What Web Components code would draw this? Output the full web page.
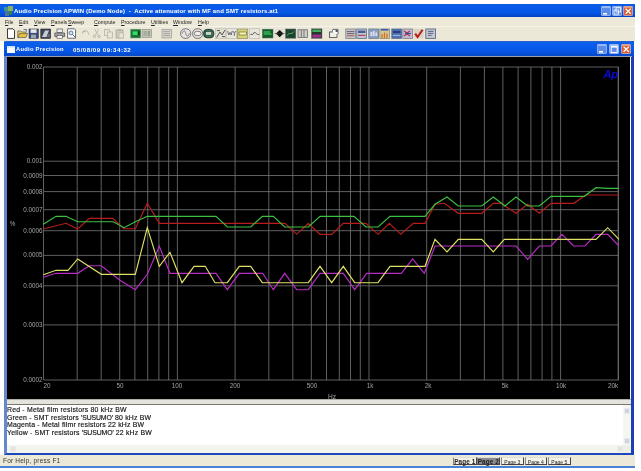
<!DOCTYPE html>
<html><head><meta charset="utf-8"><title>Audio Precision APWIN</title>
<style>
html,body{margin:0;padding:0;background:#fff;width:641px;height:471px;overflow:hidden}
body{font-family:"Liberation Sans",Arial,sans-serif}
</style></head><body>
<ap-app></ap-app>
<script>
function def(name, html, init){
  customElements.define(name, class extends HTMLElement{
    connectedCallback(){
      if(this.shadowRoot) return;
      const r=this.attachShadow({mode:'open'});
      r.innerHTML = typeof html==='function'? html(this): html;
      if(init) init(r,this);
    }
  });
}

/* caption button */
def('ap-win-btn', h=>{
  const k=h.getAttribute('kind');
  const fill = k==='close' ? '#d8603a' : '#5f8ce6';
  const hi = k==='close' ? '#eea68c' : '#a9c4f5';
  const glyph = {
    min:'<rect x="2" y="7" width="4" height="1.6" fill="#fff"/>',
    max:'<rect x="2.2" y="2.4" width="6" height="6" fill="none" stroke="#fff" stroke-width="1"/><rect x="2.2" y="2.2" width="6" height="1.4" fill="#fff"/>',
    restore:'<rect x="4" y="1.8" width="4.4" height="4.2" fill="none" stroke="#fff" stroke-width=".8"/><rect x="2" y="4" width="4.4" height="4.2" fill="none" stroke="#fff" stroke-width=".8"/>',
    close:'<path d="M2.6 2.6L7.8 7.8M7.8 2.6L2.6 7.8" stroke="#fff" stroke-width="1.3"/>'
  }[k];
  return `<style>:host{display:block;flex:none;width:10px;height:10px}
  svg{display:block;width:10px;height:10px}</style>
  <svg viewBox="0 0 10 10"><rect x=".3" y=".3" width="9.4" height="9.4" rx="1.4" fill="${fill}" stroke="#dfe8fb" stroke-width=".6"/><path d="M1 1.2h8" stroke="${hi}" stroke-width="1.2"/>${glyph}</svg>`;
});

/* top window title bar */
def('ap-titlebar', `<style>
:host{display:flex;align-items:center;height:13px;box-sizing:border-box;background:linear-gradient(#0c5ae0,#0a5cec 20%,#0656e4 70%,#0442c4);color:#fff;font:bold 6px "Liberation Sans",sans-serif;letter-spacing:.15px}
svg{width:9px;height:10px;margin-left:4px;flex:none}
span{margin-left:1px;flex:1 1 auto;white-space:pre}
.b{display:flex;flex:none;gap:1px;margin-right:2px}
</style>
<svg viewBox="0 0 9 10"><rect x="0" y="1" width="4" height="4" fill="#3a9a8a"/><rect x="4" y="0" width="5" height="5" fill="#88b060"/><rect x="1" y="5" width="4" height="5" fill="#5070a0"/><rect x="5" y="5" width="3" height="4" fill="#2f7f50"/></svg>
<span>Audio Precision APWIN (Demo Node)  -  Active attenuator with MF and SMT resistors.at1</span>
<div class="b"><ap-win-btn kind="min"></ap-win-btn><ap-win-btn kind="restore"></ap-win-btn><ap-win-btn kind="close"></ap-win-btn></div>`);

/* menu */
def('ap-menubar', h=>{
  const items=['File','Edit','View','Panels','Sweep','Compute','Procedure','Utilities','Window','Help'];
  const widths=[14,15,17,17,26,27,30,22,25,20];
  return `<style>:host{display:flex;height:10px;box-sizing:border-box;padding-left:5px;background:#ece9d8;color:#222;font:5.3px/10px "Liberation Sans",sans-serif;border-bottom:1px solid #f6f4ea}
  span{display:block;flex:none;white-space:nowrap} u{text-decoration-thickness:.5px;text-underline-offset:1px}</style>`+
  items.map((t,i)=>`<span style="width:${widths[i]}px"><u>${t[0]}</u>${t.slice(1)}</span>`).join('');
});

/* toolbar icon */
const ICONS={
 new:'<path d="M2.5 .8H8l1.5 1.5V10.4H2.5z" fill="#fff" stroke="#222" stroke-width=".9"/>',
 open:'<path d="M.8 9.6V3h3l1 1h4v1.4" fill="#f0d060" stroke="#555" stroke-width=".7"/><path d="M.8 9.6L2.6 5.4h8L9 9.6z" fill="#e8bc3c" stroke="#555" stroke-width=".7"/><path d="M6.5 1.6h3v2" fill="none" stroke="#246" stroke-width=".7"/>',
 save:'<rect x="1" y="1" width="9.4" height="9.4" fill="#3c4a7c" stroke="#223" stroke-width=".5"/><rect x="2.6" y="1.3" width="6" height="3.6" fill="#e8e8e8"/><rect x="3" y="6.6" width="5" height="3.6" fill="#9aa"/>',
 saveall:'<rect x=".8" y="1" width="9.8" height="9.4" fill="#3a4458" stroke="#111" stroke-width=".5"/><path d="M2 9L5 2.5h4L6.5 9z" fill="#c8ccd4"/><rect x="7" y="6" width="3" height="3" fill="#667"/>',
 print:'<rect x="3" y="1" width="5.4" height="3.4" fill="#eee" stroke="#444" stroke-width=".6"/><path d="M.8 5h9.8v3.6H.8z" fill="#a8a8a8" stroke="#444" stroke-width=".7"/><rect x="3" y="7.6" width="5.4" height="2.6" fill="#fff" stroke="#444" stroke-width=".6"/>',
 preview:'<path d="M1.6 .8H8.4L9.6 2V10.2H1.6z" fill="#fff" stroke="#445" stroke-width=".8"/><circle cx="5" cy="5" r="2" fill="#cfe0f0" stroke="#357" stroke-width=".7"/><path d="M6.4 6.4L9 9" stroke="#357" stroke-width=".9"/>',
 undo:'<path d="M3 3.4C6 1.8 8.6 3.4 8.6 6.6M3 3.4L2.6 6M3 3.4L5.6 3.8" fill="none" stroke="#b8b4a8" stroke-width="1"/>',
 cut:'<path d="M3.6 1L7 7.2M7.8 1L4.4 7.2" stroke="#b8b4a8" stroke-width=".8"/><circle cx="3.4" cy="8.4" r="1.2" fill="none" stroke="#b8b4a8"/><circle cx="8" cy="8.4" r="1.2" fill="none" stroke="#b8b4a8"/>',
 copy:'<rect x="1.5" y="1.5" width="5" height="6" fill="#e8e4d8" stroke="#b8b4a8" stroke-width=".8"/><rect x="4.5" y="4" width="5" height="6" fill="#e8e4d8" stroke="#b8b4a8" stroke-width=".8"/>',
 paste:'<rect x="2" y="2" width="7" height="8" fill="#cfcbbc" stroke="#aaa698" stroke-width=".8"/><rect x="4" y="1" width="3" height="2" fill="#b8b4a8"/><rect x="5" y="5" width="4.6" height="5" fill="#e8e4d8" stroke="#b0ac9e" stroke-width=".6"/>',
 gen:'<rect x=".6" y="1.2" width="10.2" height="8.8" fill="#1f6f3c" stroke="#6a7" stroke-width=".5"/><rect x="2.6" y="3.4" width="5" height="3.6" fill="#30e060"/><rect x="8" y="3.4" width="1.6" height="3.6" fill="#0a3018"/>',
 gen2:'<rect x="1" y="1.5" width="9.4" height="8" fill="#c4c4b8" stroke="#8a8a80" stroke-width=".6"/><rect x="2.4" y="3" width="4" height="5" fill="#a8b0a0"/><rect x="7" y="3" width="2" height="5" fill="#96a090"/>',
 panel:'<rect x="1" y="1.4" width="9.4" height="8.6" fill="#d8d4c8" stroke="#999" stroke-width=".7"/><path d="M2.4 3.6h6.6M2.4 5.6h6.6M2.4 7.6h6.6" stroke="#999" stroke-width=".8"/>',
 sine:'<rect x=".6" y=".8" width="10.2" height="9.6" rx="4.6" fill="#e8e6da" stroke="#557" stroke-width=".8"/><path d="M2.2 5.6C3.6 2 5 2 5.8 5.6S8 9 9.4 5.2" fill="none" stroke="#557" stroke-width=".7"/>',
 oval:'<rect x=".6" y=".8" width="10.2" height="9.6" rx="4.6" fill="#e8e6da" stroke="#556" stroke-width=".8"/><rect x="2.4" y="3.4" width="6.6" height="4.2" rx="2" fill="#f0f0e8" stroke="#556" stroke-width=".7"/>',
 scope:'<rect x=".6" y="1.4" width="10.2" height="8.4" rx="3.6" fill="#2e7a50" stroke="#223" stroke-width=".9"/><rect x="2.6" y="3.6" width="6" height="3.6" fill="#c8d8c0" stroke="#123" stroke-width=".5"/>',
 tk:'<rect x=".6" y=".8" width="10.2" height="9.6" fill="#e4e2d4" stroke="#aaa" stroke-width=".5"/><path d="M1.6 9.6L5 4l2 3 3-5M2 2.6h3M7 8.6h3" fill="none" stroke="#444" stroke-width=".9"/>',
 wy:'<rect x=".6" y=".8" width="10.2" height="9.6" fill="#e8e6da" stroke="#aaa" stroke-width=".5"/><path d="M1.6 3l1.2 4 1.2-2.6L5.2 7l1-4M7 3l1.4 2.4L10 3M8.4 5.4V8" fill="none" stroke="#445" stroke-width=".7"/>',
 ybar:'<rect x=".6" y="1" width="10.2" height="9.4" fill="#d8d470" stroke="#776" stroke-width=".6"/><rect x="2" y="4" width="7.4" height="3" fill="#f8f4a0" stroke="#555" stroke-width=".6"/>',
 wave:'<rect x=".6" y=".8" width="10.2" height="9.6" fill="#e8e6da" stroke="#aaa" stroke-width=".5"/><path d="M1.4 6.4h2.4L5.6 4l1.8 1.8 1.2 .6h1.6" fill="none" stroke="#444" stroke-width=".8"/>',
 gbar:'<rect x=".4" y="1.2" width="10.6" height="8.8" fill="#185c28" stroke="#466" stroke-width=".5"/><path d="M1.6 4h6.6M1.6 6h8" stroke="#40e070" stroke-width="1.2"/>',
 diamond:'<rect x=".6" y=".8" width="10.2" height="9.6" fill="#e4e2d4"/><path d="M5.7 2L9.4 5.6 5.7 9.2 2 5.6z" fill="#111"/><path d="M.8 5.6h9.8" stroke="#333" stroke-width=".7"/>',
 dbox:'<rect x=".6" y="1" width="10.2" height="9.2" fill="#18452c" stroke="#667" stroke-width=".6"/><path d="M2.4 7.6C4 3 6.4 8 9 3.4" fill="none" stroke="#8c8" stroke-width=".7"/>',
 gbox:'<rect x="1" y="1.8" width="9.4" height="7.6" fill="#d0cec0" stroke="#667" stroke-width=".8"/><path d="M4.4 2v7M7 2v7" stroke="#667" stroke-width=".8"/>',
 mbox:'<rect x=".4" y=".8" width="10.6" height="9.6" fill="#283828" stroke="#777" stroke-width=".5"/><rect x="1.4" y="1.6" width="8.6" height="2.4" fill="#40b060"/><rect x="1.4" y="6.6" width="8.6" height="3" fill="#a03090"/>',
 printsm:'<rect x="1.4" y="4" width="7.6" height="5.4" fill="#f0efe4" stroke="#444" stroke-width=".8"/><path d="M4 4l1-2.6h5V6.4" fill="#fff" stroke="#445" stroke-width=".8"/><rect x="7.6" y="2.2" width="2" height="1.6" fill="#223"/>',
 b1:'<rect x=".8" y="1" width="9.8" height="9.4" fill="#c8c6c0" stroke="#77808c" stroke-width=".8"/><path d="M2 3.6h7.4M2 5.6h7.4" stroke="#6a5a80" stroke-width="1"/><path d="M2 7.8h7.4" stroke="#a04a50" stroke-width=".9"/>',
 b2:'<rect x=".8" y="1" width="9.8" height="9.4" fill="#c0c4d0" stroke="#5a6a8c" stroke-width=".8"/><rect x="2" y="2.6" width="7.4" height="2.4" fill="#4a5a98"/><path d="M2 7.4h7.4" stroke="#b04a60" stroke-width="1.2"/>',
 b3:'<rect x=".8" y="1" width="9.8" height="9.4" fill="#8aa0c0" stroke="#6a7a90" stroke-width=".8"/><path d="M2.4 4h2v4h-2zM5 3h1.6v5H5zM7.4 4.6h1.8V8H7.4z" fill="#dde"/>',
 b4:'<rect x=".8" y="1" width="9.8" height="9.4" fill="#d4c890" stroke="#8a8a70" stroke-width=".8"/><path d="M2 1.8h7.4" stroke="#3050c0" stroke-width="1.5"/><path d="M3 10V6M5.5 10V4.4M8 10V5.6" stroke="#d07030" stroke-width="1.3"/>',
 b5:'<rect x=".8" y="1" width="9.8" height="9.4" fill="#4a70b0" stroke="#5a6a8c" stroke-width=".8"/><rect x="2" y="3" width="7.4" height="2" fill="#283c80"/><path d="M2 7.4h7.4" stroke="#a8c0e0" stroke-width="1"/>',
 b6:'<rect x=".8" y="1" width="9.8" height="9.4" fill="#c8bcc8" stroke="#7a7a90" stroke-width=".8"/><path d="M2 3l3 2 3-2M2 8l3-2 3 2" fill="none" stroke="#a03060" stroke-width="1.1"/><path d="M3 5.5h6" stroke="#4050a0" stroke-width="1.2"/>',
 check:'<rect x=".8" y="1" width="9.8" height="9.4" fill="#d8d4c8"/><path d="M2.2 5.6L4.6 9 9.6 1.8" fill="none" stroke="#c01818" stroke-width="2"/>',
 b8:'<rect x=".8" y="1" width="9.8" height="9.4" fill="#c8c8d0" stroke="#5a6a8c" stroke-width=".9"/><path d="M3 3.4h5.4M3 5.4h5.4M3 7.4h3.6" stroke="#5a6488" stroke-width="1"/>'
};
def('ap-tool', h=>`<style>:host{display:block;width:11.4px;height:11.4px;flex:none}svg{display:block;width:11.4px;height:11.4px}</style>
<svg viewBox="0 0 11.4 11.4">${ICONS[h.getAttribute('i')]||''}</svg>`);

def('ap-toolbar', h=>{
  const groups=[
   [5.4,['new','open','save','saveall']],
   [3.5,['print','preview']],
   [2.6,['undo','cut','copy','paste']],
   [4.6,['gen','gen2']],
   [8.6,['panel']],
   [7.6,['sine','oval','scope','tk','wy','ybar','wave']],
   [2.3,['gbar','diamond','dbox','gbox']],
   [3.4,['mbox']],
   [5.6,['printsm']],
   [5.3,['b1','b2','b3','b4','b5','b6','check','b8']]
  ];
  return `<style>:host{display:flex;align-items:center;height:14px;box-sizing:border-box;padding-bottom:1px;background:#ebe8d8}
  .g{display:flex;flex:none}</style>`+
  groups.map(([m,a])=>`<div class="g" style="margin-left:${m}px">${a.map(i=>`<ap-tool i="${i}"></ap-tool>`).join('')}</div>`).join('');
});

/* chart */
def('ap-chart', `<style>:host{display:block;width:623px;height:342px;background:#000}svg{display:block}
text{font-family:"Liberation Sans",sans-serif;font-size:6.3px;fill:#a4a4a4}
</style><svg id="s" width="623" height="342" viewBox="7 56 623 342"></svg>`, r=>{
  const X=f=>43.5+191.6*Math.log10(f/20), Y=v=>66+313*Math.log10(.002/v);
  let o='';
  const fs=[];
  for(const d of [10,100,1000,10000]) for(let k=1;k<=9;k++){const f=k*d; if(f>=20&&f<=20000) fs.push(f);}
  fs.push(20000);
  for(const f of fs) o+=`<path d="M${X(f).toFixed(1)} 66V379" stroke="#777" stroke-width=".8"/>`;
  for(const v of [.002,.001,.0009,.0008,.0007,.0006,.0005,.0004,.0003,.0002]) o+=`<path d="M43.5 ${Y(v).toFixed(1)}H618.6" stroke="#777" stroke-width=".8"/>`;
  for(const [t,v] of [['0.002',.002],['0.001',.001],['0.0009',.0009],['0.0008',.0008],['0.0007',.0007],['0.0006',.0006],['0.0005',.0005],['0.0004',.0004],['0.0003',.0003],['0.0002',.0002]])
    o+=`<text x="42.5" y="${(Y(v)+2).toFixed(1)}" text-anchor="end">${t}</text>`;
  for(const [t,x] of [['20',47],['50',120],['100',177],['200',235],['500',312],['1k',370],['2k',428],['5k',505],['10k',561],['20k',613]])
    o+=`<text x="${x}" y="387" text-anchor="middle">${t}</text>`;
  o+=`<text x="332" y="398" text-anchor="middle" style="font-size:6.6px">Hz</text>`;
  o+=`<text x="12.6" y="225" text-anchor="middle">%</text>`;
  o+=`<text x="610.5" y="77" text-anchor="middle" style="font:italic bold 11.5px 'Liberation Sans',sans-serif;fill:#0a0ad8;letter-spacing:-.5px">Ap</text>`;
  const seg=(ox,oy,a)=>a.map(([x,y])=>[ox+x/3,oy+y/3]);
  const T=(z5,z6,z7)=>[...seg(0,190,z5),...seg(210,190,z6),...seg(421,170,z7)];
  const traces=[
   ['#b81c1c',T([[130,114],[198,97],[233,114],[268,82],[338,82],[372,113],[406,113],[442,37],[478,97]],
     [[0,97],[225,97],[260,130],[295,97],[330,130],[365,130],[400,97],[468,97],[504,130],[538,97],[572,130],[610,97],[645,97]],
     [[42,100],[70,97],[112,127],[182,127],[217,97],[240,97],[285,127],[320,100],[355,127],[390,97],[458,97],[495,72],[594,72]])],
   ['#3cc040',T([[130,100],[168,76],[198,76],[233,92],[340,92],[372,110],[406,92],[442,76]],
     [[18,76],[52,108],[122,108],[157,76],[190,76],[224,108],[295,108],[330,76],[432,76],[468,108],[504,108],[540,76],[645,76]],
     [[42,100],[78,78],[112,105],[182,105],[217,78],[252,105],[285,78],[320,105],[355,105],[390,76],[490,76],[525,50],[560,52],[594,52]])],
   ['#b82cc4',T([[130,259],[168,247],[233,247],[268,224],[304,224],[360,268],[406,296],[442,250],[478,166],[510,247]],
     [[18,247],[52,296],[88,247],[158,247],[190,296],[224,247],[260,296],[295,296],[330,247],[400,247],[434,296],[470,247],[574,247],[608,204],[643,247]],
     [[42,225],[285,225],[320,265],[355,225],[390,225],[423,190],[458,225],[492,225],[525,190],[560,190],[594,225]])],
   ['#e0e064',T([[130,251],[168,238],[204,238],[233,204],[304,250],[406,250],[442,110],[478,226],[510,184],[546,275],[582,226],[616,226]],
     [[15,275],[52,275],[88,226],[122,226],[157,275],[295,275],[330,226],[365,275],[400,226],[434,275],[504,275],[540,226],[645,226]],
     [[42,205],[78,243],[112,205],[182,205],[217,243],[250,205],[525,205],[560,170],[594,205]])]
  ];
  for(const [c,p] of traces) o+=`<polyline fill="none" stroke="${c}" stroke-width="1.15" points="${p.map(q=>q[0].toFixed(1)+','+q[1].toFixed(1)).join(' ')}"/>`;
  r.getElementById('s').innerHTML=o;
});

/* legend pane */
def('ap-legend', `<style>
:host{display:grid;grid-template-columns:1fr 8px;grid-template-rows:40px 8px;height:48px;background:#fff;color:#111;font:6.9px/7.55px "Liberation Sans",sans-serif;letter-spacing:.2px}
.t{padding:1px 0 0 0;-webkit-text-stroke:.15px #111}
.t div{white-space:pre}
b{font-weight:normal;letter-spacing:-.12px}
.v{background:#f6f6f0;display:flex;flex-direction:column;justify-content:space-between;align-items:center;padding:3px 0 1px}
.h{background:#f4f4ee;display:flex;align-items:center;justify-content:space-between;padding:0 0 0 3px}
.c{background:#eeeee4}
i{display:block;width:6px;height:6px;background:#d0d4d8;border:.5px solid #e8ecf0;box-sizing:border-box}
.h i{background:#e4e4dc}
</style>
<div class="t"><div>Red - Metal film resistors 80 kHz BW</div><div>Green - SMT resistors <b>'SUSUMO'</b> 80 kHz BW</div><div>Magenta - Metal filmr resistors 22 kHz BW</div><div>Yellow - SMT resistors <b>'SUSUMO'</b> 22 kHz BW</div></div>
<div class="v"><i></i><i></i></div>
<div class="h"><i></i><i></i></div>
<div class="c"></div>`);

/* MDI child */
def('ap-child', `<style>
:host{display:flex;flex-direction:column;box-sizing:border-box;width:630px;height:414px;margin-left:4px;border-left:3px solid #6488cc;border-right:3px solid #1c40b4;border-bottom:2px solid #1c48bc;background:#fff;border-top:1px solid #2c62d0}
.tb{display:flex;align-items:center;height:14px;flex:none;margin:0 -3px;background:linear-gradient(#0c60e8,#0a5cec 30%,#0654e4 70%,#0448c8);color:#fff;font:bold 5.8px "Liberation Sans",sans-serif;letter-spacing:.25px;box-sizing:border-box}
.tb svg{width:8px;height:7px;margin-left:3px;flex:none}
.tb span{margin-left:1px;white-space:pre}
.tb .d{flex:1 1 auto;margin-left:9px;font-size:6.1px;letter-spacing:.5px}
.b{display:flex;flex:none;gap:2px;margin-right:3px}
.sep{height:6px;flex:none;background:#e4e4dc;box-sizing:border-box;border-top:1px solid #b0b0a8;border-bottom:1px solid #77776e}
.top{height:1px;background:#9aa0a8;flex:none;margin:0 -1px}
.ch{flex:none;background:#fff}
</style>
<div class="tb"><svg viewBox="0 0 8 7"><rect width="8" height="7" fill="#fff"/><rect width="8" height="1.6" fill="#cde"/></svg><span>Audio Precision</span><span class="d">05/08/09 09:34:32</span>
<div class="b"><ap-win-btn kind="min"></ap-win-btn><ap-win-btn kind="max"></ap-win-btn><ap-win-btn kind="close"></ap-win-btn></div></div>
<div class="top"></div>
<div class="ch"><ap-chart></ap-chart></div>
<div class="sep"></div>
<ap-legend></ap-legend>`);

/* status */
def('ap-status', `<style>
:host{display:flex;align-items:center;height:13px;box-sizing:border-box;background:#ece9d8;color:#333;font:6.5px "Liberation Sans",sans-serif;border-bottom:2px solid #4a80d8;letter-spacing:.2px}
.m{flex:none;width:453px;padding-left:3px;box-sizing:border-box}
.p{display:flex;gap:1px;align-items:center;margin-top:1px}
</style><div class="m">For Help, press F1</div>
<div class="p"><ap-page big>Page 1</ap-page><ap-page big sel style="margin-left:-1px">Page 2</ap-page><ap-page>Page 3</ap-page><ap-page>Page 4</ap-page><ap-page>Page 5</ap-page></div>`);

def('ap-page', h=>{
  const big=h.hasAttribute('big'), sel=h.hasAttribute('sel');
  return `<style>:host{display:block;flex:none}
  div{box-sizing:border-box;height:8.5px;width:${big?23.5:22.5}px;text-align:center;font:${big?'bold 6.4px':'5px'}/8px "Liberation Sans",sans-serif;letter-spacing:${big?'.1px':'0'};color:#222;background:${sel?'#8c8c90':'#f4f2e8'};border:.7px solid #444;border-top-color:#ddd;border-left-color:#888}</style><div><slot></slot></div>`;
});

/* app root */
def('ap-app', `<style>
:host{display:flex;flex-direction:column;width:635px;margin-top:4px;background:#fff;filter:blur(.25px)}
.ws{background:#fff;flex:none;height:414px;margin-right:-3px}
</style>
<ap-titlebar></ap-titlebar>
<ap-menubar></ap-menubar>
<ap-toolbar></ap-toolbar>
<div class="ws"><ap-child></ap-child></div>
<ap-status></ap-status>`);
</script>
</body></html>
